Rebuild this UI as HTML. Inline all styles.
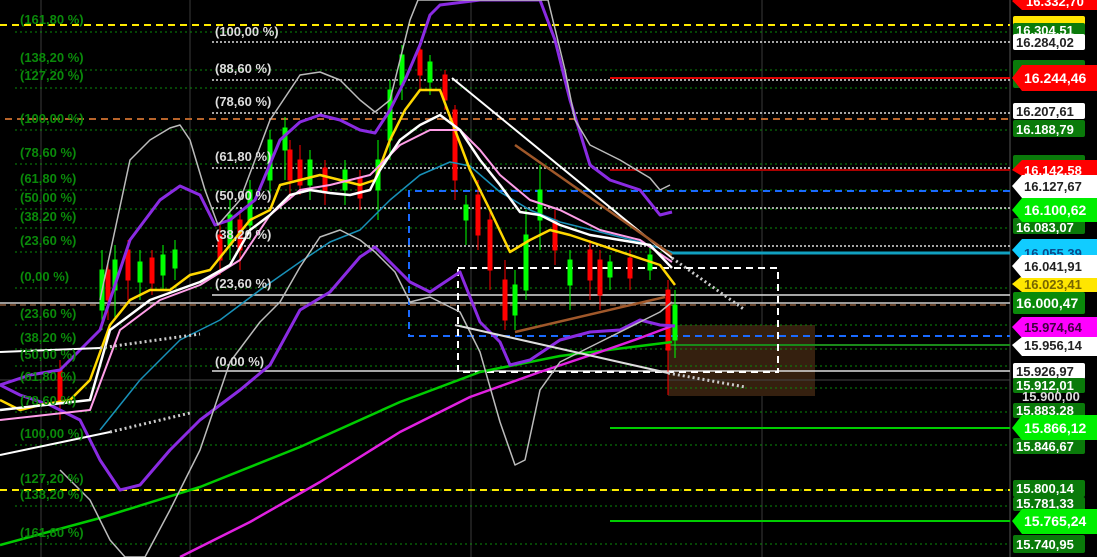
<!DOCTYPE html>
<html><head><meta charset="utf-8"><style>
html,body{margin:0;padding:0;background:#000;width:1097px;height:557px;overflow:hidden}
svg{display:block}
text{font-family:"Liberation Sans",sans-serif;font-weight:bold}
</style></head><body>
<svg width="1097" height="557" viewBox="0 0 1097 557" xmlns="http://www.w3.org/2000/svg">
<rect width="1097" height="557" fill="#000"/>
<!-- vertical grid -->
<g stroke="#3a3a3a" stroke-width="1">
<line x1="41" y1="0" x2="41" y2="557"/><line x1="190" y1="0" x2="190" y2="557"/>
<line x1="471" y1="0" x2="471" y2="557"/><line x1="762" y1="0" x2="762" y2="557"/>
<line x1="1010" y1="0" x2="1010" y2="557" stroke="#555"/>
</g>
<!-- brown rect -->
<rect x="668" y="325" width="147" height="71" fill="#35200f"/>
<!-- green dotted fib lines -->
<g stroke="#0a8a0a" stroke-width="1" stroke-dasharray="2,3">
<line x1="15" y1="32" x2="1010" y2="32"/><line x1="15" y1="70" x2="1010" y2="70"/><line x1="15" y1="88" x2="1010" y2="88"/>
<line x1="15" y1="130" x2="1010" y2="130"/><line x1="15" y1="164" x2="1010" y2="164"/><line x1="15" y1="190" x2="1010" y2="190"/>
<line x1="15" y1="209" x2="1010" y2="209"/><line x1="15" y1="228" x2="1010" y2="228"/><line x1="15" y1="252" x2="1010" y2="252"/>
<line x1="15" y1="288" x2="1010" y2="288"/><line x1="15" y1="325" x2="1010" y2="325"/><line x1="15" y1="349" x2="1010" y2="349"/>
<line x1="15" y1="366" x2="1010" y2="366"/><line x1="15" y1="388" x2="1010" y2="388"/><line x1="15" y1="412" x2="1010" y2="412"/>
<line x1="15" y1="445" x2="1010" y2="445"/><line x1="15" y1="490" x2="1010" y2="490"/><line x1="15" y1="506" x2="1010" y2="506"/>
<line x1="15" y1="544" x2="1010" y2="544"/>
</g>
<!-- white dotted fib lines -->
<g stroke="#ddd" stroke-width="1.5" stroke-dasharray="2,2">
<line x1="212" y1="42" x2="1010" y2="42"/><line x1="212" y1="80" x2="1010" y2="80"/><line x1="212" y1="113" x2="1010" y2="113"/>
<line x1="212" y1="168" x2="1010" y2="168"/><line x1="212" y1="208" x2="1010" y2="208"/><line x1="212" y1="246" x2="1010" y2="246"/>
</g>
<line x1="212" y1="295" x2="1010" y2="295" stroke="#ddd" stroke-width="1.5"/>
<line x1="212" y1="371" x2="1010" y2="371" stroke="#ddd" stroke-width="1.5"/>
<line x1="0" y1="303" x2="1010" y2="303" stroke="#ccc" stroke-width="1.5"/>
<line x1="0" y1="380" x2="1010" y2="380" stroke="#444" stroke-width="1"/>
<!-- key horizontal lines -->
<line x1="0" y1="25" x2="1010" y2="25" stroke="#ffea00" stroke-width="2" stroke-dasharray="7,5"/>
<line x1="0" y1="490" x2="1010" y2="490" stroke="#ffea00" stroke-width="2" stroke-dasharray="7,5"/>
<line x1="5" y1="119" x2="1010" y2="119" stroke="#b8642a" stroke-width="2" stroke-dasharray="7,5"/>
<line x1="0" y1="305" x2="1010" y2="305" stroke="#8a5a3a" stroke-width="1.5" stroke-dasharray="6,4"/>
<line x1="610" y1="78" x2="1010" y2="78" stroke="#d00" stroke-width="2"/>
<line x1="610" y1="170" x2="1010" y2="170" stroke="#a00" stroke-width="2"/>
<line x1="670" y1="253" x2="1010" y2="253" stroke="#11a0c0" stroke-width="3"/>
<line x1="610" y1="428" x2="1010" y2="428" stroke="#0c0" stroke-width="2"/>
<line x1="610" y1="521" x2="1010" y2="521" stroke="#0c0" stroke-width="2"/>
<line x1="668" y1="345" x2="1010" y2="345" stroke="#1a8a1a" stroke-width="2"/>
<!-- blue dashed -->
<g stroke="#1a6aff" stroke-width="2" stroke-dasharray="7,5" fill="none">
<polyline points="1010,191 409,191 409,336 1010,336"/>
</g>
<!-- white dashed rect -->
<rect x="458" y="268" width="320" height="104" fill="none" stroke="#fff" stroke-width="2" stroke-dasharray="7,5"/>
<!-- candles -->
<g stroke-width="1">
<g fill="#0f0" stroke="#0f0">
<line x1="102" y1="250" x2="102" y2="330"/><rect x="100" y="270" width="4" height="40"/>
<line x1="115" y1="245" x2="115" y2="320"/><rect x="113" y="260" width="4" height="30"/>
<line x1="140" y1="250" x2="140" y2="300"/><rect x="138" y="262" width="4" height="20"/>
<line x1="163" y1="245" x2="163" y2="290"/><rect x="161" y="255" width="4" height="20"/>
<line x1="175" y1="240" x2="175" y2="280"/><rect x="173" y="250" width="4" height="18"/>
<line x1="230" y1="200" x2="230" y2="260"/><rect x="228" y="215" width="4" height="30"/>
<line x1="250" y1="180" x2="250" y2="240"/><rect x="248" y="190" width="4" height="35"/>
<line x1="270" y1="130" x2="270" y2="200"/><rect x="268" y="140" width="4" height="40"/>
<line x1="285" y1="117" x2="285" y2="180"/><rect x="283" y="128" width="4" height="22"/>
<line x1="310" y1="150" x2="310" y2="200"/><rect x="308" y="160" width="4" height="25"/>
<line x1="345" y1="160" x2="345" y2="205"/><rect x="343" y="170" width="4" height="20"/>
<line x1="378" y1="140" x2="378" y2="220"/><rect x="376" y="160" width="4" height="30"/>
<line x1="390" y1="80" x2="390" y2="160"/><rect x="388" y="90" width="4" height="50"/>
<line x1="402" y1="45" x2="402" y2="100"/><rect x="400" y="55" width="4" height="30"/>
<line x1="430" y1="55" x2="430" y2="95"/><rect x="428" y="62" width="4" height="20"/>
<line x1="466" y1="195" x2="466" y2="245"/><rect x="464" y="205" width="4" height="15"/>
<line x1="515" y1="270" x2="515" y2="330"/><rect x="513" y="285" width="4" height="30"/>
<line x1="526" y1="210" x2="526" y2="300"/><rect x="524" y="235" width="4" height="55"/>
<line x1="540" y1="165" x2="540" y2="250"/><rect x="538" y="190" width="4" height="30"/>
<line x1="570" y1="250" x2="570" y2="310"/><rect x="568" y="260" width="4" height="25"/>
<line x1="610" y1="255" x2="610" y2="290"/><rect x="608" y="262" width="4" height="15"/>
<line x1="650" y1="245" x2="650" y2="280"/><rect x="648" y="255" width="4" height="15"/>
<line x1="675" y1="290" x2="675" y2="358"/><rect x="673" y="305" width="4" height="35"/>
</g>
<g fill="#f00" stroke="#f00">
<line x1="108" y1="260" x2="108" y2="320"/><rect x="106" y="270" width="4" height="30"/>
<line x1="128" y1="240" x2="128" y2="300"/><rect x="126" y="250" width="4" height="30"/>
<line x1="152" y1="250" x2="152" y2="295"/><rect x="150" y="258" width="4" height="25"/>
<line x1="220" y1="225" x2="220" y2="275"/><rect x="218" y="235" width="4" height="25"/>
<line x1="240" y1="210" x2="240" y2="270"/><rect x="238" y="220" width="4" height="30"/>
<line x1="290" y1="140" x2="290" y2="200"/><rect x="288" y="150" width="4" height="30"/>
<line x1="300" y1="145" x2="300" y2="195"/><rect x="298" y="160" width="4" height="25"/>
<line x1="325" y1="160" x2="325" y2="205"/><rect x="323" y="168" width="4" height="25"/>
<line x1="360" y1="170" x2="360" y2="210"/><rect x="358" y="178" width="4" height="20"/>
<line x1="420" y1="45" x2="420" y2="90"/><rect x="418" y="50" width="4" height="25"/>
<line x1="445" y1="70" x2="445" y2="110"/><rect x="443" y="75" width="4" height="25"/>
<line x1="455" y1="105" x2="455" y2="200"/><rect x="453" y="110" width="4" height="70"/>
<line x1="478" y1="180" x2="478" y2="250"/><rect x="476" y="195" width="4" height="40"/>
<line x1="490" y1="210" x2="490" y2="290"/><rect x="488" y="220" width="4" height="50"/>
<line x1="505" y1="260" x2="505" y2="330"/><rect x="503" y="280" width="4" height="40"/>
<line x1="555" y1="210" x2="555" y2="265"/><rect x="553" y="220" width="4" height="30"/>
<line x1="590" y1="240" x2="590" y2="300"/><rect x="588" y="250" width="4" height="30"/>
<line x1="600" y1="250" x2="600" y2="310"/><rect x="598" y="260" width="4" height="35"/>
<line x1="630" y1="250" x2="630" y2="290"/><rect x="628" y="258" width="4" height="20"/>
<line x1="668" y1="280" x2="668" y2="395"/><rect x="666" y="290" width="4" height="60"/>
<line x1="60" y1="360" x2="60" y2="420"/><rect x="58" y="370" width="4" height="30"/>
</g>
</g>
<!-- MAs & bands -->
<g fill="none" stroke-linejoin="round">
<polyline stroke="#0c0" stroke-width="2.5" points="0,545 100,518 200,487 300,447 400,402 480,372 560,356 640,346 672,342"/>
<polyline stroke="#e020e0" stroke-width="2.5" points="180,557 250,522 320,482 400,432 470,397 540,372 600,352 640,338 672,326"/>
<polyline stroke="#1890b8" stroke-width="1.5" points="100,430 140,380 180,340 220,320 260,290 300,262 330,242 360,230 390,200 420,175 450,162 470,166 500,192 530,210 560,222 600,232 640,242 672,252"/>
<polyline stroke="#8a2be2" stroke-width="3" points="0,385 30,375 60,370 100,330 130,240 160,200 180,186 200,195 215,225 230,220 255,200 280,140 300,122 320,115 340,120 360,130 375,133 390,110 405,80 420,45 430,15 440,5 480,0 540,0 555,40 570,100 590,165 610,180 640,190 660,215 672,212"/>
<polyline stroke="#8a2be2" stroke-width="3" points="0,385 20,395 50,405 80,420 100,460 120,490 140,485 170,450 200,420 240,390 270,365 300,310 330,292 360,257 375,247 390,262 410,282 430,292 460,272 480,322 500,342 510,365 530,360 560,340 590,332 620,330 640,320 660,325 675,326"/>
<polyline stroke="#bbb" stroke-width="1.5" points="100,300 130,160 150,140 170,128 180,125 190,140 205,190 218,225 240,200 270,120 300,75 320,72 340,80 360,100 375,112 390,100 400,60 410,20 418,0 548,0 565,70 575,120 590,145 620,160 650,178 660,190 670,185"/>
<polyline stroke="#bbb" stroke-width="1.5" points="60,470 90,500 110,540 125,557 145,557 170,510 200,450 230,362 260,322 280,302 300,267 320,237 340,230 360,240 375,252 395,272 410,302 430,297 460,312 480,352 500,422 515,465 525,460 540,390 560,362 600,342 640,322 660,312 672,302"/>
<polyline stroke="#ffd700" stroke-width="2.5" points="0,400 20,410 40,405 70,400 90,380 110,325 130,300 150,290 170,290 190,275 210,270 230,245 250,220 270,210 280,185 300,180 320,175 340,180 360,185 375,180 390,140 405,110 420,90 440,90 455,130 470,170 490,210 510,252 530,240 550,230 570,235 600,245 630,255 660,265 675,285"/>
<polyline stroke="#ff9ee8" stroke-width="2" points="0,420 90,410 120,330 160,300 200,285 240,260 270,215 300,190 330,185 370,175 400,145 430,130 460,130 480,150 500,175 530,200 560,210 600,230 640,240 672,262"/>
<polyline stroke="#fff" stroke-width="2.5" points="0,410 90,400 110,330 150,300 200,282 230,265 250,230 270,215 290,195 310,190 330,193 350,195 370,190 380,170 400,140 420,125 440,115 460,130 480,160 500,185 520,212 540,215 560,225 590,235 620,240 650,245 672,268"/>
<!-- trend lines -->
<line x1="452" y1="78" x2="672" y2="258" stroke="#fff" stroke-width="2"/>
<line x1="672" y1="258" x2="745" y2="310" stroke="#ccc" stroke-width="3" stroke-dasharray="2,3"/>
<line x1="455" y1="325" x2="668" y2="373" stroke="#ddd" stroke-width="2"/>
<line x1="668" y1="373" x2="745" y2="387" stroke="#ccc" stroke-width="3" stroke-dasharray="2,3"/>
<line x1="515" y1="145" x2="672" y2="255" stroke="#a0582a" stroke-width="2.5"/>
<line x1="515" y1="332" x2="665" y2="297" stroke="#a0582a" stroke-width="2.5"/>
<line x1="0" y1="455" x2="110" y2="432" stroke="#fff" stroke-width="2"/>
<line x1="110" y1="432" x2="190" y2="413" stroke="#ccc" stroke-width="3" stroke-dasharray="2,3"/>
<line x1="0" y1="352" x2="100" y2="348" stroke="#fff" stroke-width="2"/>
<line x1="100" y1="348" x2="200" y2="334" stroke="#ccc" stroke-width="3" stroke-dasharray="2,3"/>
</g>
<!-- left fib labels -->
<g fill="#0a8a0a" font-size="13">
<text x="20" y="24">(161,80 %)</text><text x="20" y="62">(138,20 %)</text><text x="20" y="80">(127,20 %)</text>
<text x="20" y="123">(100,00 %)</text><text x="20" y="157">(78,60 %)</text><text x="20" y="183">(61,80 %)</text>
<text x="20" y="202">(50,00 %)</text><text x="20" y="221">(38,20 %)</text><text x="20" y="245">(23,60 %)</text>
<text x="20" y="281">(0,00 %)</text><text x="20" y="318">(23,60 %)</text><text x="20" y="342">(38,20 %)</text>
<text x="20" y="359">(50,00 %)</text><text x="20" y="381">(61,80 %)</text><text x="20" y="405">(78,60 %)</text>
<text x="20" y="438">(100,00 %)</text><text x="20" y="483">(127,20 %)</text><text x="20" y="499">(138,20 %)</text>
<text x="20" y="537">(161,80 %)</text>
</g>
<g fill="#ddd" font-size="13">
<text x="215" y="36">(100,00 %)</text><text x="215" y="73">(88,60 %)</text><text x="215" y="106">(78,60 %)</text>
<text x="215" y="161">(61,80 %)</text><text x="215" y="200">(50,00 %)</text><text x="215" y="239">(38,20 %)</text>
<text x="215" y="288">(23,60 %)</text><text x="215" y="366">(0,00 %)</text>
</g>
<!-- right axis labels -->
<rect x="1011" y="0" width="86" height="557" fill="#000"/>
<g font-size="13" font-weight="normal">
<path d="M1022,-8 H1097 V10 H1022 L1012,1 Z" fill="#f00"/><text x="1026" y="6" fill="#fff">16.332,70</text>
<rect x="1013" y="16" width="72" height="14" rx="2" fill="#ffe600"/>
<rect x="1013" y="23" width="72" height="14" rx="2" fill="#0a7a0a"/><text x="1016" y="35" fill="#fff">16.304,51</text>
<rect x="1013" y="34" width="72" height="16" rx="2" fill="#fff"/><text x="1016" y="47" fill="#222">16.284,02</text>
<rect x="1013" y="60" width="72" height="28" rx="2" fill="#0a7a0a"/>
<path d="M1022,65 H1097 V91 H1022 L1012,78 Z" fill="#f00"/><text x="1024" y="83" fill="#fff" font-size="14">16.244,46</text>
<rect x="1013" y="103" width="72" height="16" rx="2" fill="#fff"/><text x="1016" y="116" fill="#222">16.207,61</text>
<rect x="1013" y="120" width="72" height="17" rx="2" fill="#0a7a0a"/><text x="1016" y="134" fill="#fff">16.188,79</text>
<rect x="1013" y="155" width="72" height="16" rx="2" fill="#0a7a0a"/>
<path d="M1022,160 H1097 V176 H1022 L1012,170 Z" fill="#f00"/><text x="1024" y="175" fill="#fff">16.142,58</text>
<path d="M1022,175 H1097 V198 H1022 L1012,186 Z" fill="#fff"/><text x="1024" y="191" fill="#222">16.127,67</text>
<rect x="1013" y="218" width="72" height="16" rx="2" fill="#0a7a0a"/><text x="1016" y="232" fill="#fff">16.083,07</text>
<path d="M1022,198 H1097 V222 H1022 L1012,210 Z" fill="#00ee00"/><text x="1024" y="215" fill="#fff" font-size="14">16.100,62</text>
<path d="M1022,239 H1097 V261 H1022 L1012,250 Z" fill="#11ccff"/><text x="1024" y="258" fill="#0a4a8a">16.055,39</text>
<path d="M1022,276 H1097 V292 H1022 L1012,284 Z" fill="#ffe600"/><text x="1024" y="289" fill="#776600">16.023,41</text>
<path d="M1022,255 H1097 V278 H1022 L1012,266 Z" fill="#fff"/><text x="1024" y="271" fill="#222">16.041,91</text>
<rect x="1013" y="292" width="72" height="22" rx="2" fill="#0a8a0a"/><text x="1016" y="308" fill="#fff" font-size="14">16.000,47</text>
<path d="M1022,317 H1097 V338 H1022 L1012,327 Z" fill="#ff00ff"/><text x="1024" y="332" fill="#400040">15.974,64</text>
<path d="M1022,337 H1097 V356 H1022 L1012,345 Z" fill="#fff"/><text x="1024" y="350" fill="#222">15.956,14</text>
<rect x="1013" y="363" width="72" height="16" rx="2" fill="#fff"/><text x="1016" y="376" fill="#222">15.926,97</text>
<rect x="1013" y="378" width="72" height="15" rx="2" fill="#0a7a0a"/><text x="1016" y="390" fill="#fff">15.912,01</text>
<text x="1022" y="401" fill="#ddd">15.900,00</text>
<rect x="1013" y="403" width="72" height="15" rx="2" fill="#0a7a0a"/><text x="1016" y="415" fill="#fff">15.883,28</text>
<rect x="1013" y="438" width="72" height="16" rx="2" fill="#0a7a0a"/><text x="1016" y="451" fill="#fff">15.846,67</text>
<path d="M1022,415 H1097 V440 H1022 L1012,428 Z" fill="#00ee00"/><text x="1024" y="433" fill="#fff" font-size="14">15.866,12</text>
<rect x="1013" y="480" width="72" height="17" rx="2" fill="#0a7a0a"/><text x="1016" y="493" fill="#fff">15.800,14</text>
<rect x="1013" y="497" width="72" height="14" rx="2" fill="#0a7a0a"/><text x="1016" y="508" fill="#fff">15.781,33</text>
<path d="M1022,509 H1097 V534 H1022 L1012,521 Z" fill="#00ee00"/><text x="1024" y="526" fill="#fff" font-size="14">15.765,24</text>
<rect x="1013" y="535" width="72" height="18" rx="2" fill="#0a7a0a"/><text x="1016" y="549" fill="#fff">15.740,95</text>
</g>
</svg>
</body></html>
